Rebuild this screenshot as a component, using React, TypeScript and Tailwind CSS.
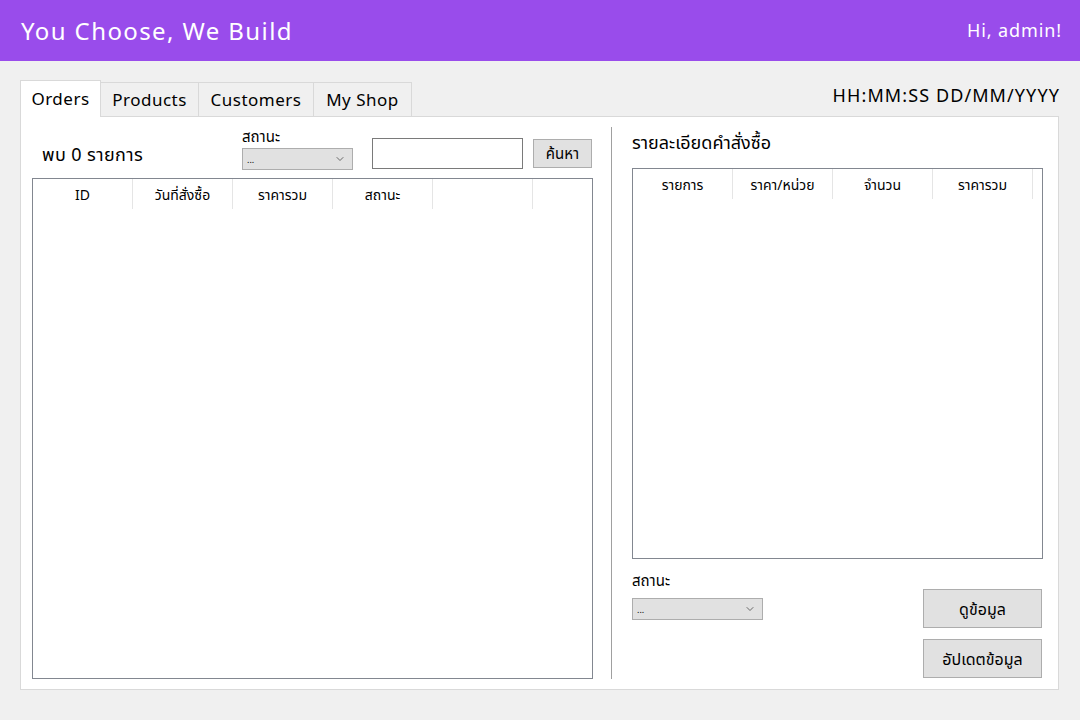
import { ChevronDown } from 'lucide-react'

const FONT = "font-['Noto_Sans','Noto_Sans_Thai','Tahoma',sans-serif]"

const TABS = [
  { label: 'Orders', w: 'w-[81px]' },
  { label: 'Products', w: 'w-[98px]' },
  { label: 'Customers', w: 'w-[115px]' },
  { label: 'My Shop', w: 'w-[98px]' },
]
const ORDER_COLS = ['ID', 'วันที่สั่งซื้อ', 'ราคารวม', 'สถานะ', '', '']
const DETAIL_COLS = ['รายการ', 'ราคา/หน่วย', 'จำนวน', 'ราคารวม']

const Select = ({ className }: { className: string }) => (
  <div
    className={`flex items-center justify-between border border-[#adadad] bg-[#e1e1e1] pl-1 pr-1.5 ${className}`}
  >
    <span className="text-[9px] leading-none text-black">...</span>
    <ChevronDown className="size-3 text-[#404040]" strokeWidth={1.5} />
  </div>
)

const App = () => {
  return (
    <div className={`flex h-[720px] w-[1080px] flex-col bg-[#f0f0f0] ${FONT}`}>
      <header className="flex h-[61px] items-center justify-between bg-[#994ceb] pl-[21px] pr-[18px] text-white">
        <h1 className="text-[24px] tracking-[1.4px]">You Choose, We Build</h1>
        <span className="text-[18px] tracking-[0.9px]">Hi, admin!</span>
      </header>

      <div className="flex flex-col px-5 pt-[19px]">
        <div className="flex items-end justify-between">
          <div className="flex items-end">
            {TABS.map((tab, i) => (
              <div
                key={tab.label}
                className={
                  i === 0
                    ? `relative z-10 -mb-px flex h-[37px] items-center justify-center border border-b-0 border-[#d9d9d9] bg-white text-[17px] tracking-[0.5px] ${tab.w}`
                    : `relative z-10 -mb-px flex h-[35px] items-center justify-center border border-l-0 border-[#d9d9d9] pt-[1px] text-[17px] tracking-[0.5px] ${tab.w}`
                }
              >
                {tab.label}
              </div>
            ))}
          </div>
          <span className="pb-[7px] text-[18px] tracking-[1.1px]">HH:MM:SS DD/MM/YYYY</span>
        </div>

        <div className="flex h-[574px] w-[1039px] border border-[#d9d9d9] bg-white pb-[10px] pt-[10px]">
          <div className="flex w-[590px] flex-col pl-[11px] pr-[18px]">
            <div className="flex h-[51px] items-start">
              <span className="mt-[14px] w-[210px] pl-[10px] text-[18px] tracking-[0.4px]">พบ 0 รายการ</span>
              <div className="-mt-[2px] flex flex-col">
                <span className="text-[15px] leading-[23px]">สถานะ</span>
                <Select className="h-[22px] w-[111px]" />
              </div>
              <div className="ml-[19px] mt-[11px] h-[31px] w-[151px] border border-[#7a7a7a]" />
              <button className="ml-[10px] mt-[12px] h-[29px] w-[59px] border border-[#adadad] bg-[#e1e1e1] text-[15px]">
                ค้นหา
              </button>
            </div>
            <div className="flex-1 border border-[#828790]">
              <div className="flex h-[30px]">
                {ORDER_COLS.map((c, i) => (
                  <div
                    key={i}
                    className="flex w-[100px] shrink-0 items-center justify-center border-r border-[#e5e5e5] text-[14px]"
                  >
                    {c}
                  </div>
                ))}
              </div>
            </div>
          </div>

          <div className="w-px bg-[#a0a0a0]" />

          <div className="flex flex-1 flex-col pl-5 pr-[15px]">
            <div className="flex h-[41px] items-start pt-[2px] text-[18px]">รายละเอียดคำสั่งซื้อ</div>
            <div className="h-[391px] border border-[#828790]">
              <div className="flex h-[30px]">
                {DETAIL_COLS.map((c) => (
                  <div
                    key={c}
                    className="flex w-[100px] shrink-0 items-center justify-center border-r border-[#e5e5e5] text-[14px]"
                  >
                    {c}
                  </div>
                ))}
              </div>
            </div>
            <div className="flex justify-between pt-[10px]">
              <div className="flex flex-col">
                <span className="text-[15px] leading-[22px]">สถานะ</span>
                <Select className="mt-[7px] h-[22px] w-[131px]" />
              </div>
              <div className="mr-px flex flex-col gap-[11px] pt-[20px]">
                <button className="h-[39px] w-[119px] border border-[#adadad] bg-[#e1e1e1] text-[16px]">
                  ดูข้อมูล
                </button>
                <button className="h-[39px] w-[119px] border border-[#adadad] bg-[#e1e1e1] text-[16px]">
                  อัปเดตข้อมูล
                </button>
              </div>
            </div>
          </div>
        </div>
      </div>
    </div>
  )
}

export default App
